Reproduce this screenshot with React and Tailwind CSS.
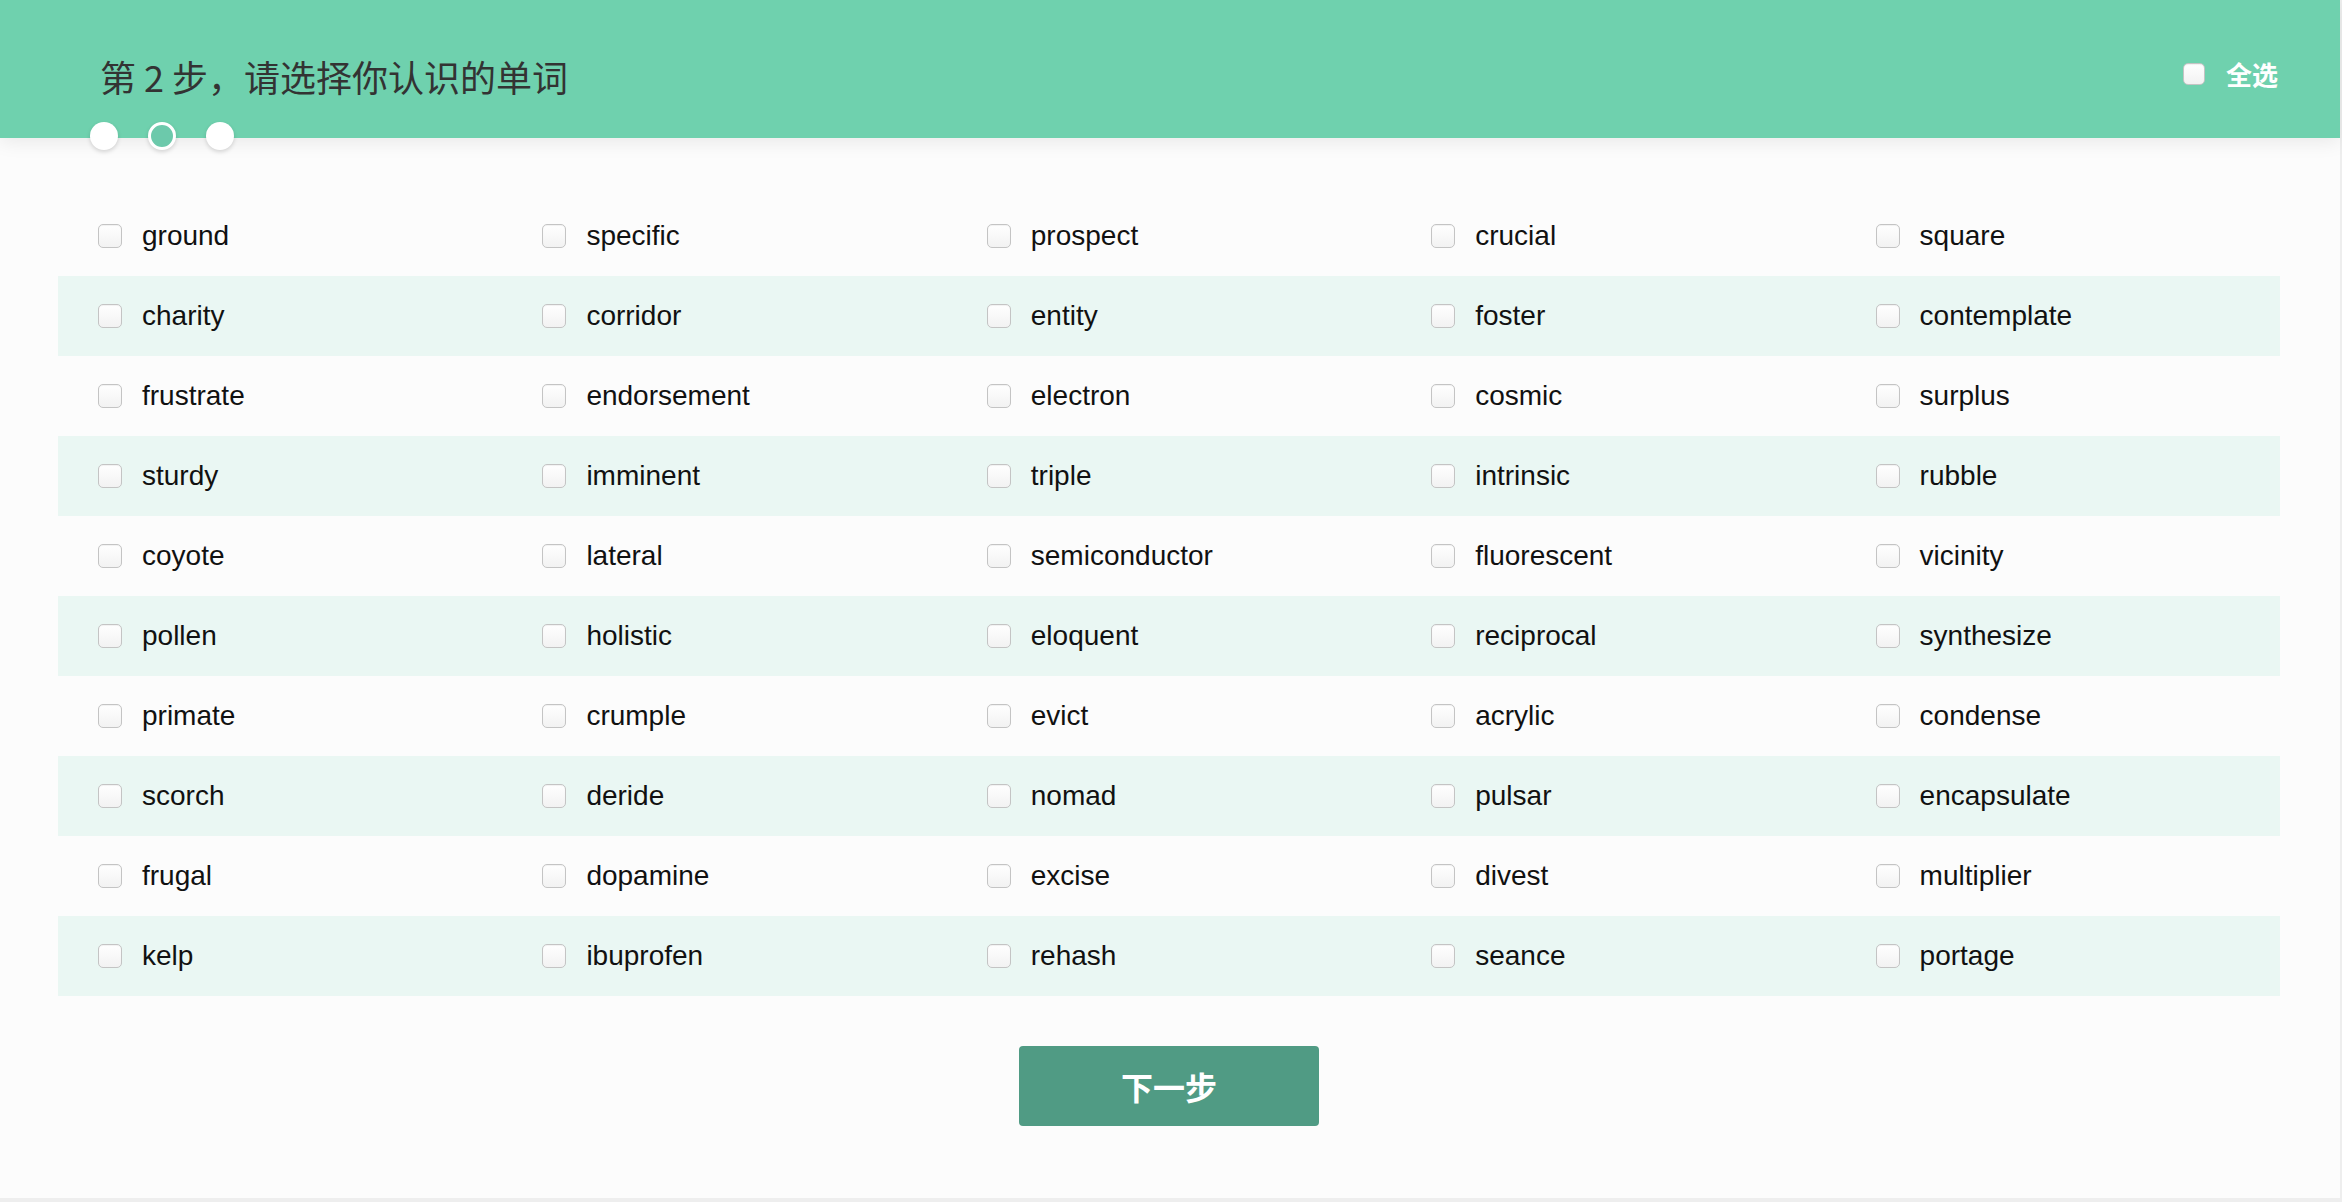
import { useState } from "react";

const WORDS = [
  ["ground", "specific", "prospect", "crucial", "square"],
  ["charity", "corridor", "entity", "foster", "contemplate"],
  ["frustrate", "endorsement", "electron", "cosmic", "surplus"],
  ["sturdy", "imminent", "triple", "intrinsic", "rubble"],
  ["coyote", "lateral", "semiconductor", "fluorescent", "vicinity"],
  ["pollen", "holistic", "eloquent", "reciprocal", "synthesize"],
  ["primate", "crumple", "evict", "acrylic", "condense"],
  ["scorch", "deride", "nomad", "pulsar", "encapsulate"],
  ["frugal", "dopamine", "excise", "divest", "multiplier"],
  ["kelp", "ibuprofen", "rehash", "seance", "portage"],
];

function Box({ checked, onChange, small }) {
  return (
    <input
      type="checkbox"
      checked={checked}
      onChange={onChange}
      className={
        (small ? "w-[22px] h-[22px]" : "w-[24px] h-[24px]") +
        " shrink-0 appearance-none rounded-[5px] border border-[#c4c4c4] bg-gradient-to-b from-white to-[#f2f2f2] shadow-[inset_0_1px_1px_rgba(0,0,0,0.06)] checked:bg-[#509b84] checked:border-[#509b84] cursor-pointer"
      }
    />
  );
}

export default function App() {
  const [selected, setSelected] = useState({});

  const allWords = WORDS.flat();
  const allChecked = allWords.every((w) => selected[w]);

  const toggle = (w) => setSelected((s) => ({ ...s, [w]: !s[w] }));

  const toggleAll = () => {
    const next = {};
    allWords.forEach((w) => (next[w] = !allChecked));
    setSelected(next);
  };

  return (
    <div className="min-h-screen bg-[#eeeeee] font-['Liberation_Sans','Noto_Sans_CJK_SC',sans-serif]">
      <div className="w-[2340px] h-[1198px] bg-[#fcfcfc]">
        {/* header */}
        <div className="relative z-10 h-[138px] bg-[#6fd1ae] shadow-[0_4px_18px_rgba(0,0,0,0.08)] flex items-start justify-between pl-[90px] pr-[62px]">
          <div className="flex flex-col">
            <h1 className="mt-[51px] ml-[10px] text-[36px] leading-[50px] text-[#333333] font-['Noto_Sans_CJK_SC',sans-serif] font-normal">
              第 2 步，请选择你认识的单词
            </h1>
            <div className="mt-[21px] flex gap-[30px]">
              <span className="w-[28px] h-[28px] rounded-full bg-white shadow-[0_2px_4px_rgba(0,0,0,0.15)]" />
              <span className="w-[28px] h-[28px] rounded-full bg-[#6cc9ab] border-[3px] border-white shadow-[0_2px_4px_rgba(0,0,0,0.15)]" />
              <span className="w-[28px] h-[28px] rounded-full bg-white shadow-[0_2px_4px_rgba(0,0,0,0.15)]" />
            </div>
          </div>
          <label className="mt-[56px] flex items-center gap-[21px] cursor-pointer">
            <Box small checked={allChecked} onChange={toggleAll} />
            <span className="text-[26px] leading-[36px] font-bold text-white font-['Noto_Sans_CJK_SC',sans-serif]">
              全选
            </span>
          </label>
        </div>

        {/* word table */}
        <div className="mt-[58px] ml-[58px] w-[2222px]">
          {WORDS.map((row, i) => (
            <div
              key={i}
              className={
                "grid grid-cols-5 h-[80px] " +
                (i % 2 === 1 ? "bg-[#eaf7f3]" : "")
              }
            >
              {row.map((w) => (
                <label
                  key={w}
                  className="flex items-center gap-[20px] pl-[40px] cursor-pointer"
                >
                  <Box checked={!!selected[w]} onChange={() => toggle(w)} />
                  <span className="text-[28px] text-[#111111]">{w}</span>
                </label>
              ))}
            </div>
          ))}
        </div>

        <div className="mt-[50px] flex justify-center ml-[58px] w-[2222px]">
          <button className="w-[300px] h-[80px] rounded-[4px] bg-[#509b84] text-white text-[32px] font-bold font-['Noto_Sans_CJK_SC',sans-serif]">
            下一步
          </button>
        </div>
      </div>
    </div>
  );
}
